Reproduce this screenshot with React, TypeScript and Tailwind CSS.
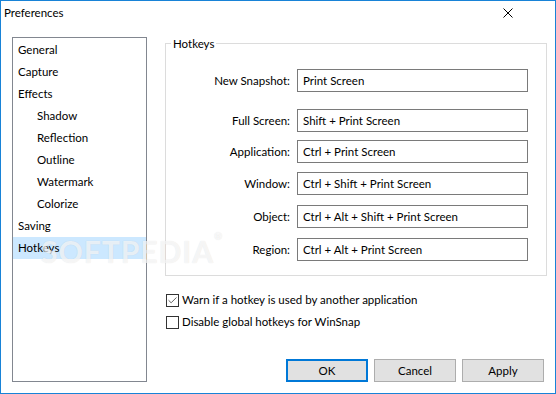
import { Check } from "lucide-react";

const hotkeys = [
  { label: "New Snapshot:", value: "Print Screen", mt: "mt-0" },
  { label: "Full Screen:", value: "Shift + Print Screen", mt: "mt-[17px]" },
  { label: "Application:", value: "Ctrl + Print Screen", mt: "mt-[8px]" },
  { label: "Window:", value: "Ctrl + Shift + Print Screen", mt: "mt-[9px]" },
  { label: "Object:", value: "Ctrl + Alt + Shift + Print Screen", mt: "mt-[10px]" },
  { label: "Region:", value: "Ctrl + Alt + Print Screen", mt: "mt-[10px]" },
];

const pages = [
  { name: "General", sub: false },
  { name: "Capture", sub: false },
  { name: "Effects", sub: false },
  { name: "Shadow", sub: true },
  { name: "Reflection", sub: true },
  { name: "Outline", sub: true },
  { name: "Watermark", sub: true },
  { name: "Colorize", sub: true },
  { name: "Saving", sub: false },
  { name: "Hotkeys", sub: false },
];

function Checkbox({ checked, label }: { checked: boolean; label: string }) {
  return (
    <label className="flex items-center h-[22px]">
      <span className="w-[13px] h-[13px] border border-[#333333] bg-white flex items-center justify-center">
        {checked && <Check className="w-[11px] h-[11px] text-[#555555]" strokeWidth={2} />}
      </span>
      <span className="ml-[3px]">{label}</span>
    </label>
  );
}

export default function App() {
  return (
    <div
      className="relative w-[556px] h-[394px] border border-[#1883d7] bg-white flex flex-col text-[11.5px] text-black overflow-hidden"
      style={{ fontFamily: 'Lato, "Segoe UI", sans-serif' }}
    >
      {/* Title bar */}
      <div className="h-[29px] flex items-center justify-between pl-[3px] pr-[42px] pb-[5px]">
        <span>Preferences</span>
        <svg width="10" height="10" viewBox="0 0 10 10">
          <path d="M0.5 0.5 L9.5 9.5 M9.5 0.5 L0.5 9.5" stroke="#000" strokeWidth="1" />
        </svg>
      </div>

      <div className="flex flex-1 pl-[11px] pt-[7px] pb-[11px]">
        {/* Page list */}
        <div className="w-[135px] h-full border border-[#828790] pt-[1px]">
          {pages.map((p) => (
            <div
              key={p.name}
              className={`h-[22px] flex items-center ${p.sub ? "pl-[24px]" : "pl-[5px]"} ${
                p.name === "Hotkeys" ? "bg-[#cce8ff]" : ""
              }`}
            >
              {p.name}
            </div>
          ))}
        </div>

        {/* Right column */}
        <div className="flex flex-col flex-1 ml-[18px] mr-[8px] pt-[6px]">
          <div className="relative border border-[#dcdcdc] pt-[25px] pb-[14px] pr-[18px]">
            <span className="absolute -top-[9px] left-[5px] bg-white px-[2px]">Hotkeys</span>
            {hotkeys.map((h) => (
              <div key={h.label} className={`flex items-center ${h.mt}`}>
                <span className="w-[124px] text-right">{h.label}</span>
                <div className="ml-[7px] flex-1 h-[23px] border border-[#7a7a7a] flex items-center px-[5px]">
                  {h.value}
                </div>
              </div>
            ))}
          </div>

          <div className="mt-[13px] pl-[1px]">
            <Checkbox checked label="Warn if a hotkey is used by another application" />
            <Checkbox checked={false} label="Disable global hotkeys for WinSnap" />
          </div>

          <div className="mt-auto flex justify-end gap-[6px] pr-[3px]">
            <button className="w-[82px] h-[23px] bg-[#e1e1e1] border-2 border-[#0078d7]">OK</button>
            <button className="w-[82px] h-[23px] bg-[#e1e1e1] border border-[#adadad]">Cancel</button>
            <button className="w-[82px] h-[23px] bg-[#e1e1e1] border border-[#adadad]">Apply</button>
          </div>
        </div>
      </div>

      {/* Watermark */}
      <div className="absolute left-[40px] top-[228px] pointer-events-none text-[30px] font-bold tracking-[1px] text-white/70 [text-shadow:0_0_1px_rgba(0,0,0,0.12)]">
        SOFTPEDIA<span className="text-[10px] align-top">®</span>
      </div>
    </div>
  );
}
